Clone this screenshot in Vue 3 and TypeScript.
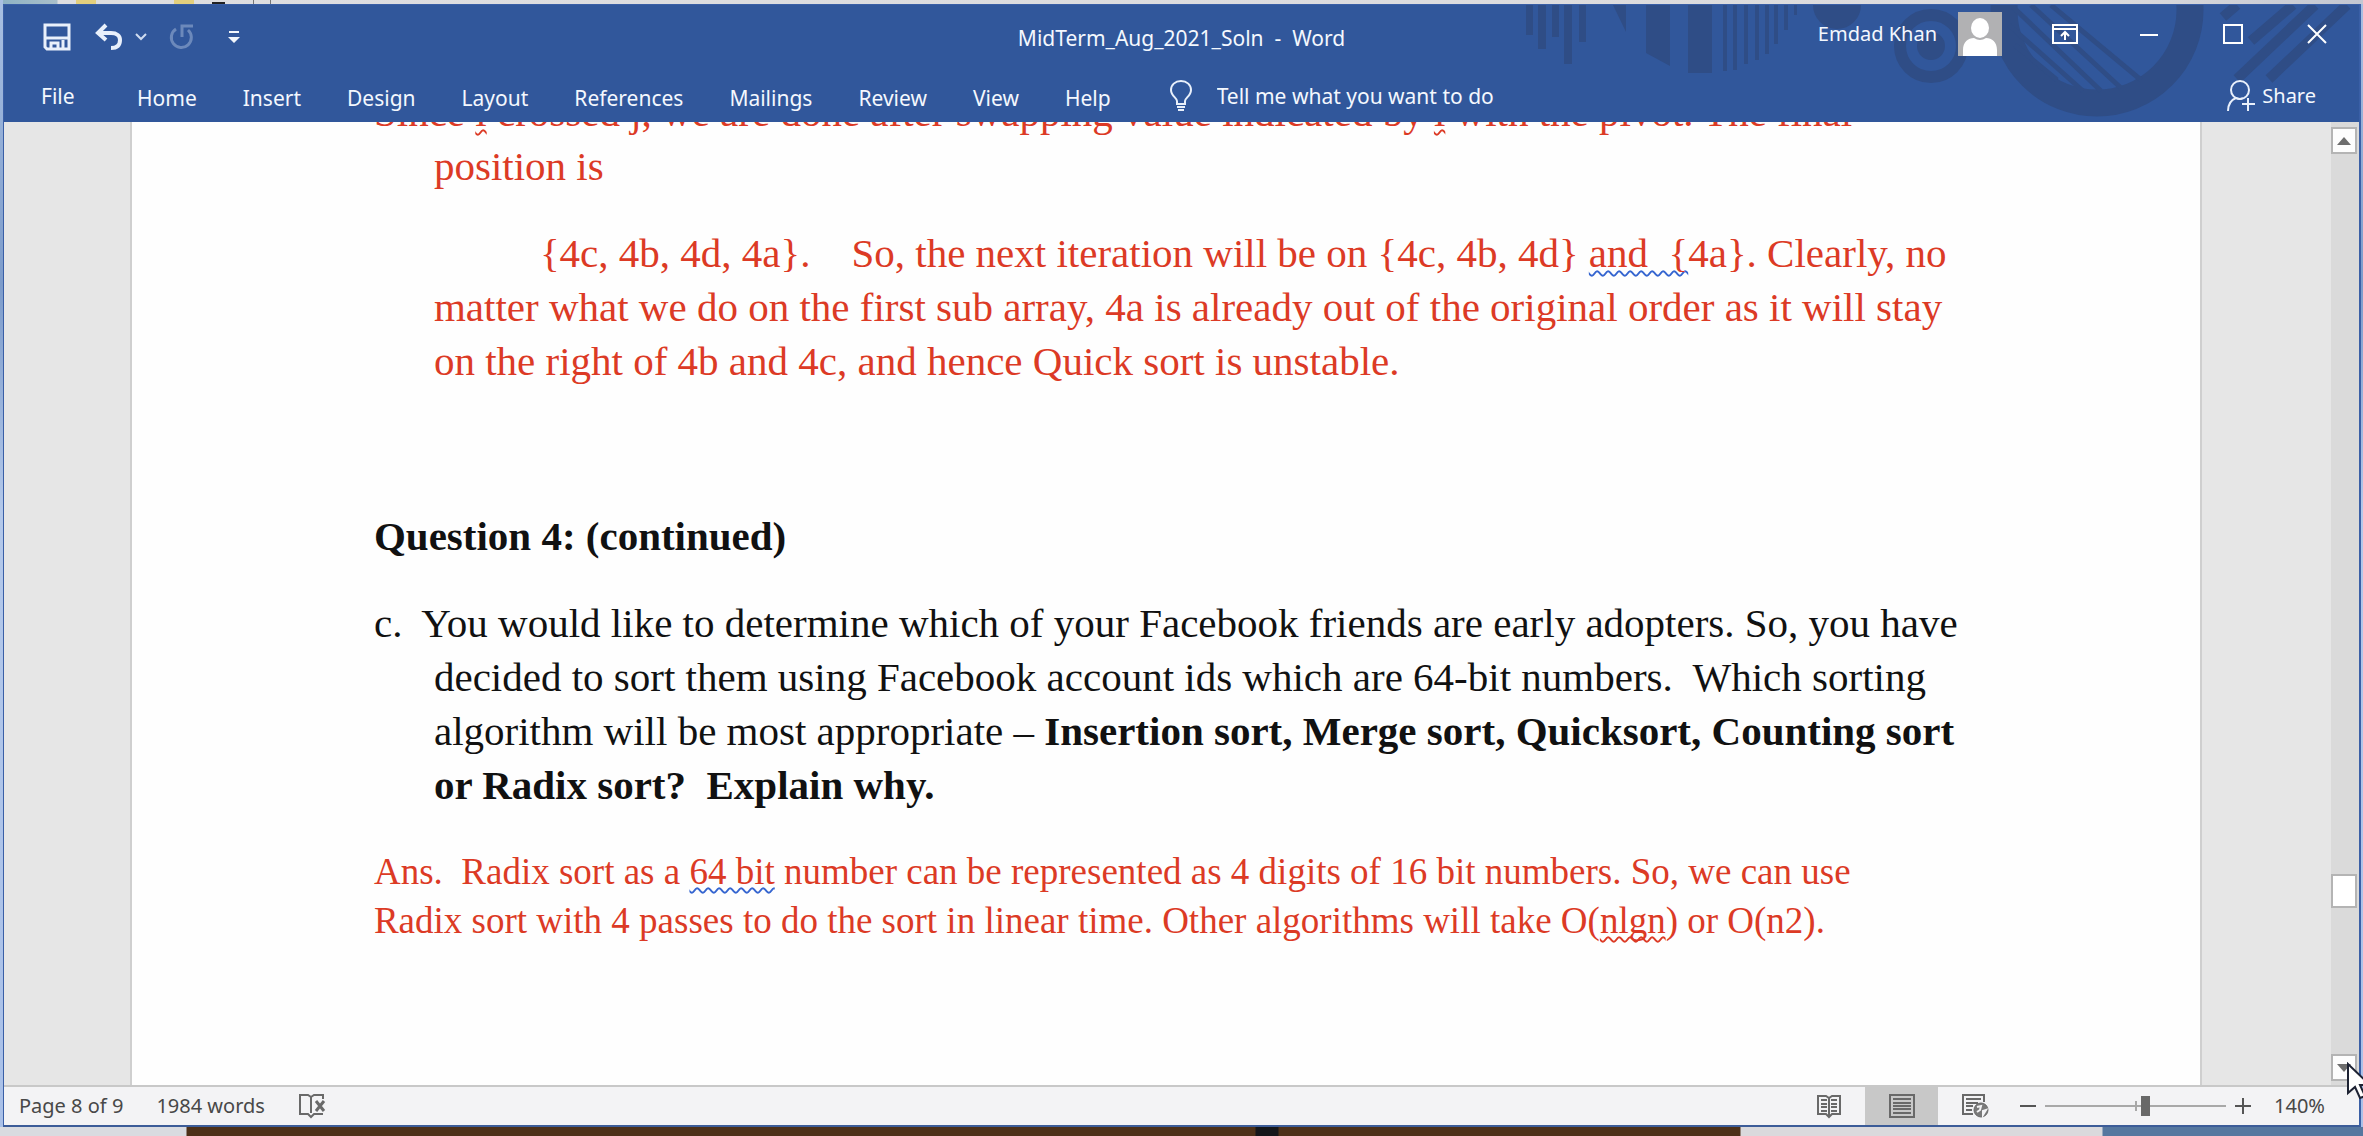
<script setup lang="ts">
import { ref } from 'vue'

const tabs: string[] = ['Home', 'Insert', 'Design', 'Layout', 'References', 'Mailings', 'Review', 'View', 'Help']
const query = ref('')
const zoom = ref(56)

interface Bar { x: number; w: number; h: number }
const bars: Bar[] = [
  { x: 5, w: 7, h: 30 }, { x: 17, w: 8, h: 44 }, { x: 31, w: 7, h: 32 }, { x: 43, w: 8, h: 59 },
  { x: 58, w: 7, h: 37 }, { x: 167, w: 24, h: 68 }, { x: 202, w: 4, h: 66 }, { x: 212, w: 4, h: 65 },
  { x: 223, w: 4, h: 59 }, { x: 234, w: 4, h: 55 }, { x: 244, w: 4, h: 49 }, { x: 253, w: 4, h: 39 },
  { x: 263, w: 4, h: 25 }, { x: 273, w: 3, h: 10 },
]
</script>

<template>
  <div class="desktop">
    <div class="strip-top"><i class="e1"></i><i class="e2"></i><i class="e3"></i><i class="e4"></i><i class="e5"></i></div>
    <div class="window">
      <header class="ribbon">
        <svg class="art" width="838" height="117" viewBox="0 0 838 117" aria-hidden="true">
          <g fill="#2f4d86">
            <rect v-for="b in bars" :key="b.x" :x="b.x" y="0" :width="b.w" :height="b.h" />
            <path d="M92 0H105V27Z M125 0H149V61L125 48Z" />
            <circle cx="316" cy="0" r="24" />
            <circle cx="410" cy="41" r="14" />
          </g>
          <g fill="none" stroke="#2f4d86">
            <circle cx="410" cy="41" r="31" stroke-width="12" />
            <circle cx="576" cy="5" r="93" stroke-width="27" />
            <path stroke-width="5" d="M530 0L620 75M510 0L600 83M492 2L580 86M488 20L562 86M494 40L536 75" />
            <path stroke-width="10" d="M702 12L716 0M730 36L772 0M716 74L794 0M748 74L826 0" />
          </g>
        </svg>

        <div class="titlebar">
          <div class="quick">
            <button class="save" aria-label="Save">
              <svg width="28" height="28" viewBox="0 0 28 28" fill="none" stroke="#e9f0fb" stroke-width="3">
                <path d="M2 2H26V26H4L2 24Z" /><path d="M3 15H25" /><path d="M8 26V20H15V26" /><path d="M20 17V26" />
              </svg>
            </button>
            <button class="undo" aria-label="Undo">
              <svg width="28" height="28" viewBox="0 0 28 28" fill="none" stroke="#e9f0fb" stroke-width="4">
                <path d="M11 2L3 10L11 17" /><path d="M3 10H16C22 10 25 13 25 17C25 22 22 25 16 25" />
              </svg>
            </button>
            <button class="more" aria-label="Undo history">
              <svg width="12" height="8" viewBox="0 0 12 8" fill="none" stroke="#cfdcf0" stroke-width="2"><path d="M1 1L6 6L11 1" /></svg>
            </button>
            <button class="redo" aria-label="Repeat" disabled>
              <svg width="26" height="28" viewBox="0 0 26 28" fill="none" stroke="#6c89bb" stroke-width="3">
                <path d="M8 6A10 10 0 1 0 20 7" /><path d="M14 14V3H25" />
              </svg>
            </button>
            <button class="custom" aria-label="Customize Quick Access Toolbar">
              <svg width="12" height="13" viewBox="0 0 12 13" fill="#f2f6fc"><path d="M1 0H11V2H1Z M0 6H12L6 12Z" /></svg>
            </button>
          </div>
          <h1 class="doc-title">MidTerm_Aug_2021_Soln&nbsp; -&nbsp; Word</h1>
          <div class="account">
            <span class="user">Emdad Khan</span>
            <svg class="avatar" width="44" height="44" viewBox="0 0 44 44" aria-hidden="true">
              <rect width="44" height="44" fill="#b1b1b3" />
              <ellipse cx="22" cy="16" rx="9" ry="10" fill="#fff" />
              <path d="M5 44V38C5 30 10 26 16 26Q22 30 28 26C34 26 39 30 39 38V44Z" fill="#fff" />
            </svg>
            <div class="controls">
              <button aria-label="Ribbon display options">
                <svg width="26" height="20" viewBox="0 0 26 20" fill="none" stroke="#fff" stroke-width="2">
                  <path d="M1 1H25V19H1Z M1 5H25" /><path d="M13 16V8M9 12L13 8L17 12" />
                </svg>
              </button>
              <button aria-label="Minimize">
                <svg width="20" height="20" viewBox="0 0 20 20" stroke="#fff" stroke-width="2"><path d="M1 11H19" /></svg>
              </button>
              <button aria-label="Maximize">
                <svg width="20" height="20" viewBox="0 0 20 20" fill="none" stroke="#fff" stroke-width="2"><path d="M1 1H19V19H1Z" /></svg>
              </button>
              <button aria-label="Close">
                <svg width="20" height="20" viewBox="0 0 20 20" stroke="#fff" stroke-width="2"><path d="M1 1L19 19M19 1L1 19" /></svg>
              </button>
            </div>
          </div>
        </div>

        <div class="tabrow">
          <button class="file">File</button>
          <nav class="tabs">
            <button v-for="t in tabs" :key="t">{{ t }}</button>
          </nav>
          <label class="tell">
            <svg width="24" height="32" viewBox="0 0 24 32" fill="none" stroke="#e9f0fb" stroke-width="2">
              <path d="M8 24V21C8 18 2 16 2 10C2 5 6 1 12 1S22 5 22 10C22 16 16 18 16 21V24Z M8 27H16M9 30H15" />
            </svg>
            <input v-model="query" type="text" placeholder="Tell me what you want to do" aria-label="Tell me what you want to do" />
          </label>
          <button class="share">
            <svg width="28" height="32" viewBox="0 0 28 32" fill="none" stroke="#e9f0fb" stroke-width="2">
              <circle cx="13" cy="10" r="9" /><path d="M1 31C1 24 4 20 9 18Q13 20 16 18M21 18V31M15 24H28" />
            </svg>
            <span>Share</span>
          </button>
        </div>
      </header>

      <main class="workspace">
        <article class="page">
          <p class="hang red">Since <u class="err">i</u> crossed j, we are done after swapping value indicated by <u class="err">i</u> with the pivot. The final<br>position is</p>
          <p class="body red first">{4c, 4b, 4d, 4a}.&nbsp;&nbsp;&nbsp; So, the next iteration will be on {4c, 4b, 4d} <u class="gram">and&nbsp; {</u>4a}. Clearly, no<br>matter what we do on the first sub array, 4a is already out of the original order as it will stay<br>on the right of 4b and 4c, and hence Quick sort is unstable.</p>
          <h2>Question 4: (continued)</h2>
          <p class="hang">c.&nbsp; You would like to determine which of your Facebook friends are early adopters. So, you have<br>decided to sort them using Facebook account ids which are 64-bit numbers.&nbsp; Which sorting<br>algorithm will be most appropriate – <b>Insertion sort, Merge sort, Quicksort, Counting sort<br>or Radix sort?&nbsp; Explain why.</b></p>
          <p class="answer red">Ans.&nbsp; Radix sort as a <u class="gram">64 bit</u> number can be represented as 4 digits of 16 bit numbers. So, we can use<br>Radix sort with 4 passes to do the sort in linear time. Other algorithms will take O(<u class="err">nlgn</u>) or O(n2).</p>
        </article>
        <div class="scroll">
          <button aria-label="Scroll up"><svg width="14" height="8" viewBox="0 0 14 8" fill="#6d6d6d"><path d="M0 8L7 0L14 8Z" /></svg></button>
          <div class="above"></div>
          <div class="thumb"></div>
          <div class="below"></div>
          <button aria-label="Scroll down"><svg width="14" height="8" viewBox="0 0 14 8" fill="#6d6d6d"><path d="M0 0L7 8L14 0Z" /></svg></button>
        </div>
      </main>

      <footer class="status">
        <span>Page 8 of 9</span>
        <span class="words">1984 words</span>
        <button class="proof" aria-label="Proofing errors">
          <svg width="28" height="26" viewBox="0 0 28 26" fill="none" stroke="#696969" stroke-width="2">
            <path d="M13 20V4L10 2H2V21H10L13 24L16 21H25M13 4L16 2H25V6" /><path d="M18 8L26 18M26 8L18 18" stroke-width="3" />
          </svg>
        </button>
        <div class="views">
          <button aria-label="Read mode">
            <svg width="26" height="26" viewBox="0 0 26 26" fill="none" stroke="#696969" stroke-width="2">
              <path d="M10 3H2V21H10L13 24L16 21H24V3H16L13 5Z M13 4V24" /><path d="M5 7H11M5 11H11M5 14H11M5 18H11M15 7H21M15 11H21M15 14H21M15 18H21" />
            </svg>
          </button>
          <button class="on" aria-label="Print layout">
            <svg width="26" height="26" viewBox="0 0 26 26" fill="none" stroke="#696969" stroke-width="2">
              <path d="M1 2H25V24H1Z M4 6H22M4 10H22M4 13H22M4 16H22M4 20H22" />
            </svg>
          </button>
          <button aria-label="Web layout">
            <svg width="28" height="26" viewBox="0 0 28 26" fill="none" stroke="#696969" stroke-width="2">
              <path d="M12 21H2V2H23V9M5 6H20M5 10H17M5 13H12M5 17H11" /><circle cx="20" cy="17" r="7" fill="#7a7a7a" stroke-width="1" /><path d="M16 14L20 13L19 17L16 19M22 18L25 17L22 22Z" stroke="#f3f3f5" />
            </svg>
          </button>
        </div>
        <button class="step" aria-label="Zoom out"><svg width="16" height="16" viewBox="0 0 16 16" stroke="#555" stroke-width="2"><path d="M0 8H16" /></svg></button>
        <input v-model.number="zoom" class="zoom" type="range" min="0" max="100" aria-label="Zoom" />
        <button class="step" aria-label="Zoom in"><svg width="16" height="16" viewBox="0 0 16 16" stroke="#555" stroke-width="2"><path d="M0 8H16M8 0V16" /></svg></button>
        <span class="percent">140%</span>
      </footer>
    </div>
    <div class="strip-bottom"></div>
    <svg class="cursor" width="26" height="38" viewBox="0 0 26 38" aria-hidden="true">
      <path d="M2 2V31L9 25L14 36L19 34L14 23H24Z" fill="#fff" stroke="#1d2233" stroke-width="2" />
    </svg>
  </div>
</template>

<style>
html, body { height: 100%; overflow: hidden; }
#app { height: 100%; }
</style>

<style scoped>
* { box-sizing: border-box; }
button { border: 0; padding: 0; background: none; font: inherit; color: inherit; display: block; }
svg { display: block; flex: none; }
.desktop {
  position: relative; height: 100vh; overflow: hidden; display: flex; flex-direction: column;
  padding: 0 2px 0 3px; background: linear-gradient(#a9c0e2, #7d9ccb 25%, #b3c8ea 45%, #a9c0e8);
  font-family: "Noto Sans", "Open Sans", sans-serif;
}
.strip-top {
  height: 4px; margin-right: -2px; display: flex; align-items: stretch; flex: none;
  background: linear-gradient(90deg, #8fb3c4 0, #a9bfca 54px, #dedee0 55px, #dcdbdd 2100px, #c3c7d2);
}
.strip-top i { display: block; width: 20px; background: #e3cf7d; }
.strip-top .e1 { margin-left: 73px; }
.strip-top .e2 { margin-left: 78px; }
.strip-top .e3 { width: 13px; height: 2px; margin: 2px 0 0 18px; background: #222; }
.strip-top .e4 { width: 1px; margin-left: 28px; background: #777; }
.strip-top .e5 { width: 1px; margin-left: 16px; background: #777; }
.window {
  flex: 1; min-height: 0; display: flex; flex-direction: column;
  border: 1px solid #3a5fa6; border-right-width: 2px; border-bottom: 2px solid #3c5c98;
}
.ribbon { position: relative; flex: none; background: #31579b; color: #f4f8fe; font-size: 21px; line-height: 28px; }
.art { position: absolute; top: 0; right: 0; }
.titlebar { position: relative; height: 65px; display: grid; grid-template-columns: 1fr auto 1fr; align-items: start; }
.quick { display: flex; align-items: center; height: 28px; margin: 18px 0 0 39px; }
.undo { margin-left: 24px; }
.more { margin-left: 12px; }
.redo { margin-left: 21px; }
.custom { margin-left: 34px; }
.doc-title { margin: 19px 0 0; font-size: 21px; line-height: 28px; font-weight: 400; }
.account { display: flex; justify-content: flex-end; align-items: center; height: 58px; }
.user { margin-right: 21px; font-size: 20px; }
.controls { display: flex; align-items: center; margin-left: 21px; }
.controls button { width: 84px; display: flex; justify-content: center; }
.tabrow { position: relative; height: 52px; display: flex; align-items: center; padding: 0 43px 0 37px; }
.file { width: 96px; text-align: left; }
.tabs { display: flex; gap: 46px; padding-top: 3px; }
.tell { display: flex; align-items: center; margin-left: 58px; gap: 24px; }
.tell input { width: 320px; height: 28px; padding: 0; border: 0; background: none; font: inherit; color: inherit; outline: 0; }
.tell input::placeholder { color: #f4f8fe; opacity: 1; }
.share { display: flex; align-items: center; gap: 7px; margin-left: auto; font-size: 20px; }
.workspace {
  flex: 1; min-height: 0; overflow: hidden; background: #e6e6e6;
  display: grid; grid-template-columns: minmax(0, 126fr) minmax(0, 2073fr) minmax(0, 129fr) 28px;
}
.page {
  grid-column: 2; min-height: 0; padding-left: 242px; background: #fefefe; color: #111;
  border: solid #cfcfcf; border-width: 0 2px;
  font-family: "Liberation Serif", serif; font-size: 41px; line-height: 54px; white-space: nowrap;
}
.page p, .page h2 { margin: 0 0 33px; font-size: 41px; }
.page .hang { padding-left: 60px; text-indent: -60px; }
.page .hang:first-child { margin-top: -37px; }
.page .body { padding-left: 60px; }
.page .first { text-indent: 106px; }
.page h2 { margin-top: 121px; }
.page .answer { margin-top: 35px; font-size: 37px; line-height: 49px; }
.page .red { color: #dc3a25; }
u { text-decoration: underline wavy 2px; text-decoration-skip-ink: none; text-underline-offset: 3px; }
.err { text-decoration-color: #dc3a25; }
.gram { text-decoration-color: #3565d0; }
.scroll { grid-column: 4; padding: 5px 2px 4px 0; display: flex; flex-direction: column; background: #dadada; }
.scroll button { height: 27px; display: flex; align-items: center; justify-content: center; border: 2px solid #b4b4b4; background: #fdfdfd; }
.above { flex: 722 0 0; }
.below { flex: 146 0 0; }
.thumb { height: 34px; border: 2px solid #b4b4b4; background: #fff; }
.status { flex: none; height: 40px; display: flex; align-items: center; padding: 0 34px 0 15px; border-top: 2px solid #c8c8c8; background: #f3f3f5; color: #484848; font-size: 20px; line-height: 28px; }
.words { margin-left: 33px; }
.proof { margin-left: 33px; }
.views { margin-left: auto; display: flex; align-self: stretch; }
.views button { width: 73px; display: flex; align-items: center; justify-content: center; }
.views .on { background: #c8c8c8; }
.step { margin: 0 9px; }
.zoom { appearance: none; width: 181px; height: 20px; margin: 0; background: linear-gradient(#a8a8a8, #a8a8a8) center / 100% 2px no-repeat, linear-gradient(#a8a8a8, #a8a8a8) center / 2px 10px no-repeat; }
.zoom::-webkit-slider-thumb { appearance: none; width: 9px; height: 20px; border: 0; border-radius: 0; background: #686868; }
.percent { margin-left: 14px; }
.strip-bottom { flex: none; height: 9px; margin: 0 -2px 0 -3px; background: linear-gradient(90deg, #d9dbe0 0 186px, #4d3018 187px 1255px, #15161a 1256px 1278px, #4d3018 1279px 1740px, #dad9dc 1741px 2102px, #56779f 2103px); }
.cursor { position: absolute; right: -9px; bottom: 36px; }
</style>
